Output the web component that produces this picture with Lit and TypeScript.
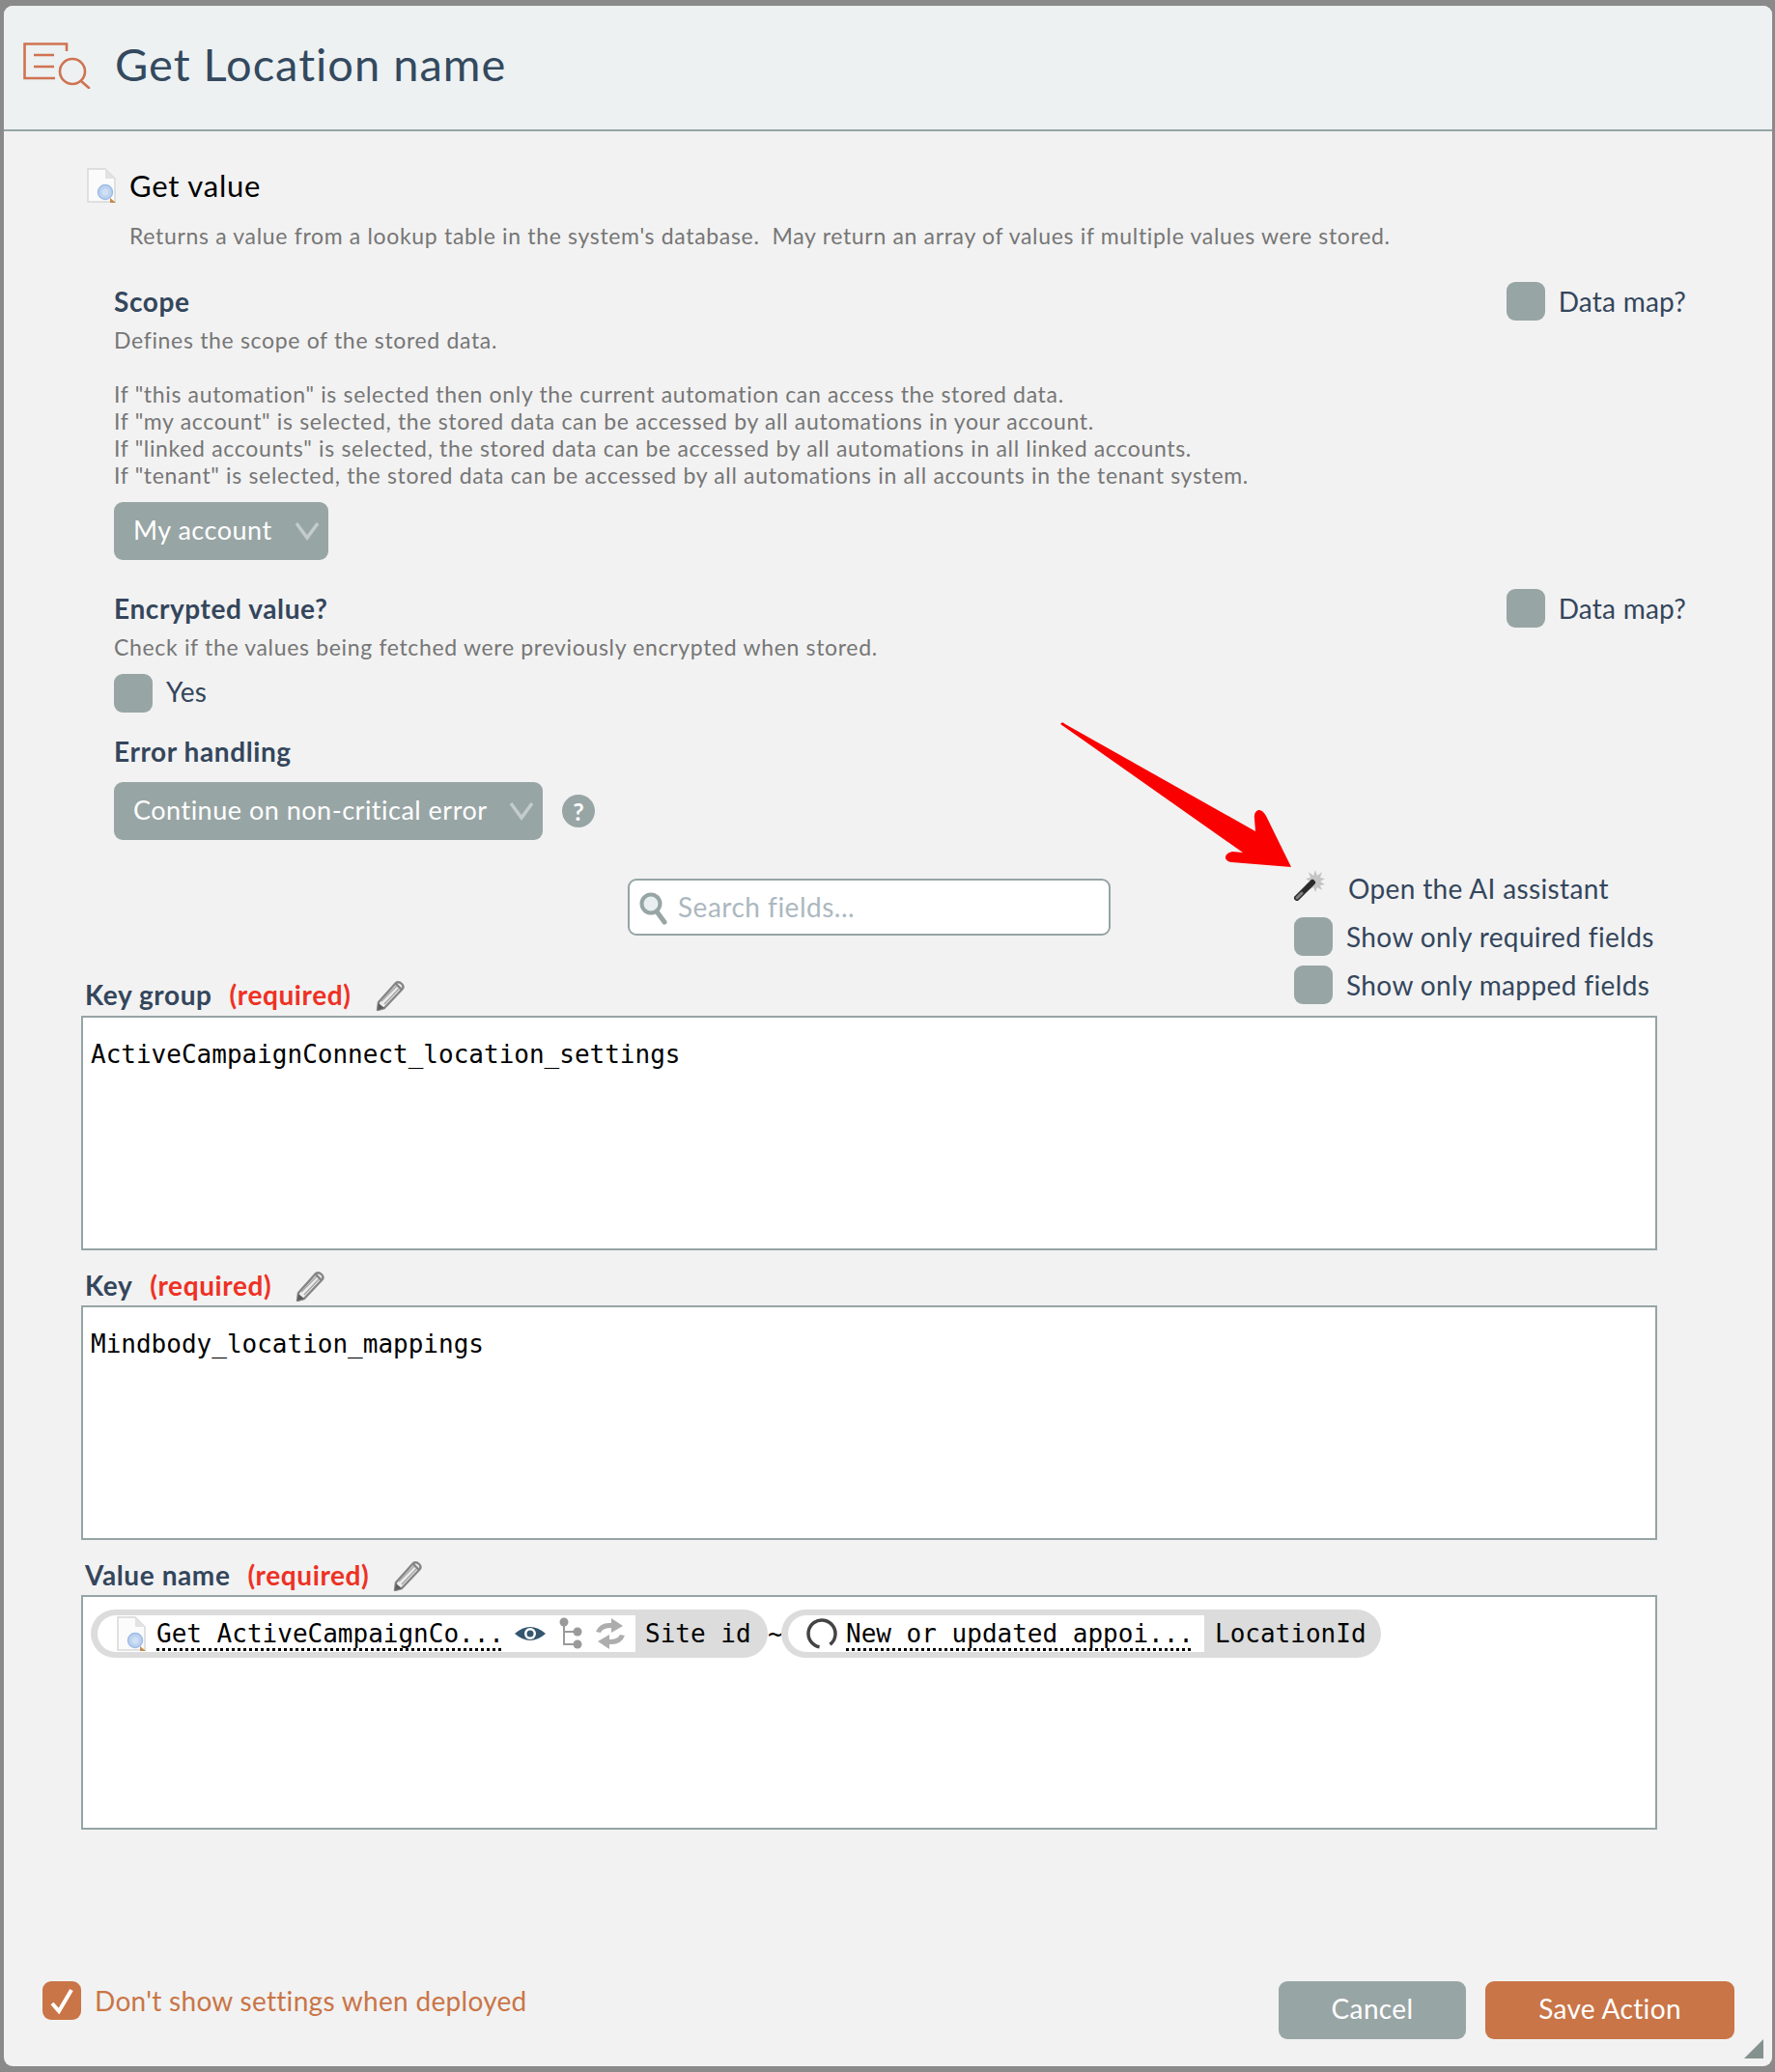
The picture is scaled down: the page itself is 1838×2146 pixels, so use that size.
import { LitElement, html, css, svg } from "lit";
import { customElement } from "lit/decorators.js";

const pencil = html`<svg class="pencil" viewBox="0 0 32 32"><path d="M4 23 L22 3 Q25 1 28 4 Q31 7 28 10 L10 29 L3 31 Z" fill="#ececec" stroke="#858585" stroke-width="2.4" stroke-linejoin="round"/><path d="M7 22 L24 5 M10 25 L26 8" stroke="#a8a8a8" stroke-width="1.6"/><path d="M22 4 L28 10" stroke="#858585" stroke-width="2.4"/><path d="M3 31 L4 24 L10 29 Z" fill="#5c5c5c"/></svg>`;

const doc = html`<svg class="doc" viewBox="0 0 30 36"><path d="M1 1 H19 L29 11 V35 H1 Z" fill="#fbfbfb" stroke="#d8d8d8" stroke-width="1.5"/><path d="M19 1 V11 H29 Z" fill="#e2e2e2"/><circle cx="19" cy="25" r="7.5" fill="#bcd2ef" stroke="#9dbce6" stroke-width="1.5"/><circle cx="19" cy="25" r="3.5" fill="#cfe0f5"/><path d="M24 31 L30 36 H24 Z" fill="#c58a4c"/></svg>`;

@customElement("app-root")
export class AppRoot extends LitElement {
  static styles = css`
    :host { display: block; width: 1838px; height: 2146px; background: #8a8a8a; position: relative; overflow: hidden;
      font-family: Lato, "Open Sans", sans-serif; color: #34465c; }
    * { box-sizing: border-box; }
    .panel { position: absolute; left: 4px; top: 6px; width: 1831px; height: 2134px; background: #f2f2f2; border-radius: 9px; display: flex; flex-direction: column; overflow: hidden; }
    .header { height: 130px; flex: none; background: #edf1f2; border-bottom: 2px solid #96a4a5; display: flex; align-items: center; padding: 0 0 4px 20px; gap: 22px; }
    .logo { width: 72px; height: 48px; flex: none; }
    .title { font-size: 47px; line-height: 56px; letter-spacing: 1px; color: #34495e; margin: -4px 0 0 1px; }
    .action { display: flex; align-items: center; gap: 14px; margin: 41px 0 0 86px; height: 30px; }
    .doc { width: 30px; height: 36px; flex: none; }
    .action-name { font-size: 31px; line-height: 30px; letter-spacing: .8px; color: #000; }
    .note { font-size: 23px; line-height: 28px; letter-spacing: .67px; color: #767676; }
    .lead { margin: 23px 0 0 130px; }
    .sec { margin-left: 114px; padding-right: 89px; }
    .scope { margin-top: 34px; }
    .enc { margin-top: 30px; }
    .row { display: flex; justify-content: space-between; align-items: center; height: 40px; }
    .h { font-size: 28px; font-weight: 700; letter-spacing: .6px; color: #34465c; line-height: 30px; }
    .check { display: flex; align-items: center; gap: 14px; font-size: 28px; letter-spacing: .25px; height: 40px; }
    .box { width: 40px; height: 40px; border-radius: 9px; background: #98a5a5; flex: none; }
    .yes { margin-top: 14px; }
    .yes span:last-child { margin-top: -4px; }
    .select { display: inline-flex; align-items: center; justify-content: space-between; height: 60px; border-radius: 9px; background: #98a5a5; color: #fff; font-size: 27px; letter-spacing: .5px; padding: 0 9px 3px 20px; }
    .select svg { width: 26px; height: 20px; flex: none; margin-top: 3px; }
    .s1 { width: 222px; margin-top: 14px; }
    .s2 { width: 444px; }
    .selrow { display: flex; align-items: center; gap: 20px; margin-top: 17px; }
    .help { width: 34px; height: 34px; border-radius: 50%; background: #98a5a5; color: #fff; font-size: 25px; font-weight: 700; display: flex; align-items: center; justify-content: center; }
    .toolbar { display: flex; margin: 33px 0 0 80px; height: 149px; }
    .tleft { width: 1256px; flex: none; display: flex; flex-direction: column; justify-content: space-between; padding-bottom: 3px; }
    .search { margin: 7px 0 0 566px; width: 500px; height: 59px; border: 2px solid #96a4a5; border-radius: 9px; background: #fff; display: flex; align-items: center; gap: 11px; padding: 0 0 2px 9px; font-size: 28px; letter-spacing: .5px; color: #acb8bf; }
    .search svg { width: 30px; height: 36px; flex: none; margin-top: 2px; }
    .tright { display: flex; flex-direction: column; white-space: nowrap; }
    .ai { display: flex; align-items: center; gap: 24px; height: 36px; font-size: 28px; letter-spacing: .35px; margin-bottom: 11px; padding-bottom: 2px; }
    .ai svg { width: 32px; height: 32px; flex: none; margin-top: -6px; }
    .opt { margin-bottom: 10px; }
    .tright .check { letter-spacing: .38px; padding-bottom: 1px; }
    .fields { margin-left: 80px; width: 1632px; }
    .label { display: flex; align-items: center; height: 36px; padding: 0 0 2px 4px; font-size: 28px; font-weight: 700; letter-spacing: .6px; color: #34465c; gap: 18px; }
    .req { color: #ee3124; }
    .pencil { width: 32px; height: 32px; flex: none; margin: 2px 0 0 6px; }
    .field { height: 243px; background: #fff; border: 2px solid #96a4a5; margin-top: 2px; padding: 22px 0 0 8px; font-family: "DejaVu Sans Mono", "Liberation Mono", monospace; font-size: 26px; line-height: 32px; color: #000; }
    .f1 { margin-top: 0; }
    .next { margin-top: 19px; }
    .chips { display: flex; align-items: center; padding: 13px 0 0 8px; }
    .f3 { padding: 0; }
    .chip { height: 50px; border-radius: 25px; background: #dcdcdc; display: flex; align-items: center; padding-left: 7px; white-space: nowrap; }
    .inner { height: 38px; background: #fff; border-radius: 19px 0 0 19px; display: flex; align-items: center; padding-left: 20px; }
    .inner .doc { width: 30px; height: 36px; margin-right: 11px; }
    .ref { text-decoration: underline dotted 3px; text-underline-offset: 6px; }
    .c1 { width: 701px; }
    .c1 .inner { width: 557px; }
    .c1 .ico { margin-left: 10px; }
    .c1 .tree { margin-left: 0; }
    .c1 .sync { margin: 0 0 0 -1px; }
    .tail { padding-left: 10px; }
    .tilde { width: 14px; flex: none; text-align: center; }
    .c2 { width: 621px; }
    .c2 .inner { width: 431px; padding-left: 18px; }
    .ring { width: 34px; height: 34px; flex: none; margin-right: 8px; }
    .ico { width: 34px; height: 34px; flex: none; margin-right: 8px; }
    .c2 .tail { padding-left: 11px; }
    .footer { margin-top: auto; display: flex; justify-content: space-between; align-items: flex-start; padding: 0 39px 28px 40px; }
    .dep { display: flex; align-items: center; gap: 14px; height: 40px; font-size: 28px; letter-spacing: .3px; color: #c97547; }
    .dep .box { background: #c97547; display: flex; align-items: center; justify-content: center; }
    .dep svg { width: 26px; height: 28px; }
    .btns { display: flex; gap: 20px; }
    .btn { height: 60px; border-radius: 9px; color: #fff; font-size: 28px; letter-spacing: .35px; padding-bottom: 5px; display: flex; align-items: center; justify-content: center; }
    .cancel { width: 194px; background: #98a5a5; }
    .save { width: 258px; background: #c97547; }
    .grip { position: absolute; right: 9px; bottom: 8px; width: 20px; height: 20px; }
    .arrow { position: absolute; left: 0; top: 0; width: 1838px; height: 2146px; pointer-events: none; }
  `;

  render() {
    const chev = html`<svg viewBox="0 0 26 20"><path d="M2 2 L13 17 L24 2" fill="none" stroke="#c3cbcb" stroke-width="3.5"/></svg>`;
    return html`
      <div class="panel">
        <div class="header">
          <svg class="logo" viewBox="0 0 72 48" fill="none" stroke="#cf7350" stroke-width="2.6">
            <path d="M45 9 V1.5 H1.5 V37 H33"/>
            <path d="M11 13 H32 M11 25 H32"/>
            <circle cx="51" cy="30" r="13"/>
            <path d="M60 40 L68 47" stroke-linecap="round"/>
          </svg>
          <div class="title">Get Location name</div>
        </div>
        <div class="action">${doc}<div class="action-name">Get value</div></div>
        <div class="note lead">Returns a value from a lookup table in the system's database.&nbsp; May return an array of values if multiple values were stored.</div>

        <div class="sec scope">
          <div class="row"><div class="h">Scope</div><div class="check"><span class="box"></span>Data map?</div></div>
          <div class="note" style="margin-top:6px">Defines the scope of the stored data.<br><br>If "this automation" is selected then only the current automation can access the stored data.<br>If "my account" is selected, the stored data can be accessed by all automations in your account.<br>If "linked accounts" is selected, the stored data can be accessed by all automations in all linked accounts.<br>If "tenant" is selected, the stored data can be accessed by all automations in all accounts in the tenant system.</div>
          <div class="select s1">My account ${chev}</div>
        </div>

        <div class="sec enc">
          <div class="row"><div class="h">Encrypted value?</div><div class="check"><span class="box"></span>Data map?</div></div>
          <div class="note" style="margin-top:6px">Check if the values being fetched were previously encrypted when stored.</div>
          <div class="check yes"><span class="box"></span><span>Yes</span></div>
          <div class="h" style="margin-top:25px">Error handling</div>
          <div class="selrow"><div class="select s2">Continue on non-critical error ${chev}</div><div class="help">?</div></div>
        </div>

        <div class="toolbar">
          <div class="tleft">
            <div class="search">
              <svg viewBox="0 0 30 36"><circle cx="13" cy="14" r="9.5" fill="#e9eeee" stroke="#98a5a5" stroke-width="4"/><path d="M19 22 L27 33" stroke="#98a5a5" stroke-width="5" stroke-linecap="round"/></svg>
              Search fields...
            </div>
            <div class="label">Key group <span class="req">(required)</span> ${pencil}</div>
          </div>
          <div class="tright">
            <div class="ai">
              <svg viewBox="0 0 32 32">
                <path d="M22 0 L24 6 L29 2 L27 8 L32 9 L27 12 L32 15 L27 16 L29 21 L24 18 L22 23 L20 18 L15 21 L17 16 L12 15 L17 12 L12 9 L17 8 L15 2 L20 6 Z" fill="#c4c4c4"/>
                <path d="M3 29 L19 13" stroke="#2b2b2b" stroke-width="6" stroke-linecap="round"/>
                <path d="M3 29 L8 24" stroke="#808080" stroke-width="3" stroke-linecap="round"/>
              </svg>
              Open the AI assistant
            </div>
            <div class="check opt"><span class="box"></span>Show only required fields</div>
            <div class="check"><span class="box"></span>Show only mapped fields</div>
          </div>
        </div>

        <div class="fields">
          <div class="field f1">ActiveCampaignConnect_location_settings</div>
          <div class="label next">Key <span class="req">(required)</span> ${pencil}</div>
          <div class="field">Mindbody_location_mappings</div>
          <div class="label next">Value name <span class="req">(required)</span> ${pencil}</div>
          <div class="field f3">
            <div class="chips">
              <div class="chip c1">
                <div class="inner">${doc}<span class="ref">Get ActiveCampaignCo...</span>
                  <svg class="ico" viewBox="0 0 34 34"><path d="M1 17 Q17 3 33 17 Q17 31 1 17 Z" fill="#34566f"/><circle cx="17" cy="17" r="6" fill="#fff"/><circle cx="17" cy="17" r="3.5" fill="#34566f"/></svg>
                  <svg class="ico tree" viewBox="0 0 34 34" fill="#9a9a9a"><path d="M10 4 V28 H22 M10 15 H22" fill="none" stroke="#9a9a9a" stroke-width="2"/><circle cx="10" cy="5" r="4.5"/><circle cx="24" cy="15" r="4.5"/><circle cx="24" cy="28" r="4.5"/></svg>
                  <svg class="ico sync" viewBox="0 0 34 34" fill="#adadad"><path d="M2 15 Q6 5 18 6 V1 L30 9 L18 16 V11 Q9 11 7 16 Z"/><path d="M32 19 Q28 29 16 28 V33 L4 25 L16 18 V23 Q25 23 27 18 Z"/></svg>
                </div>
                <span class="tail">Site id</span>
              </div>
              <span class="tilde">~</span>
              <div class="chip c2">
                <div class="inner">
                  <svg class="ring" viewBox="0 0 34 34"><circle cx="17" cy="17" r="14" fill="none" stroke="#444" stroke-width="3.5" stroke-dasharray="76 12" transform="rotate(100 17 17)"/></svg>
                  <span class="ref">New or updated appoi...</span>
                </div>
                <span class="tail">LocationId</span>
              </div>
            </div>
          </div>
        </div>

        <div class="footer">
          <div class="dep">
            <span class="box"><svg viewBox="0 0 26 28"><path d="M3 17 L10 25 L23 3" fill="none" stroke="#fff" stroke-width="4"/></svg></span>
            Don't show settings when deployed
          </div>
          <div class="btns">
            <div class="btn cancel">Cancel</div>
            <div class="btn save">Save Action</div>
          </div>
        </div>
        <svg class="grip" viewBox="0 0 20 20"><path d="M20 0 V20 H0 Z" fill="#84928f"/></svg>
      </div>
      <svg class="arrow" viewBox="0 0 1838 2146">
        ${svg`<path d="M1099 749 Q1097 750 1101 752 L1287 883 L1276 882 Q1268 884 1269 889 Q1270 892 1275 893 L1337 898 L1311 845 Q1307 838 1303 839 Q1298 841 1299 848 L1300 861 L1103 750 Q1100 747 1099 749 Z" fill="#fa0000"/>`}
      </svg>
    `;
  }
}
